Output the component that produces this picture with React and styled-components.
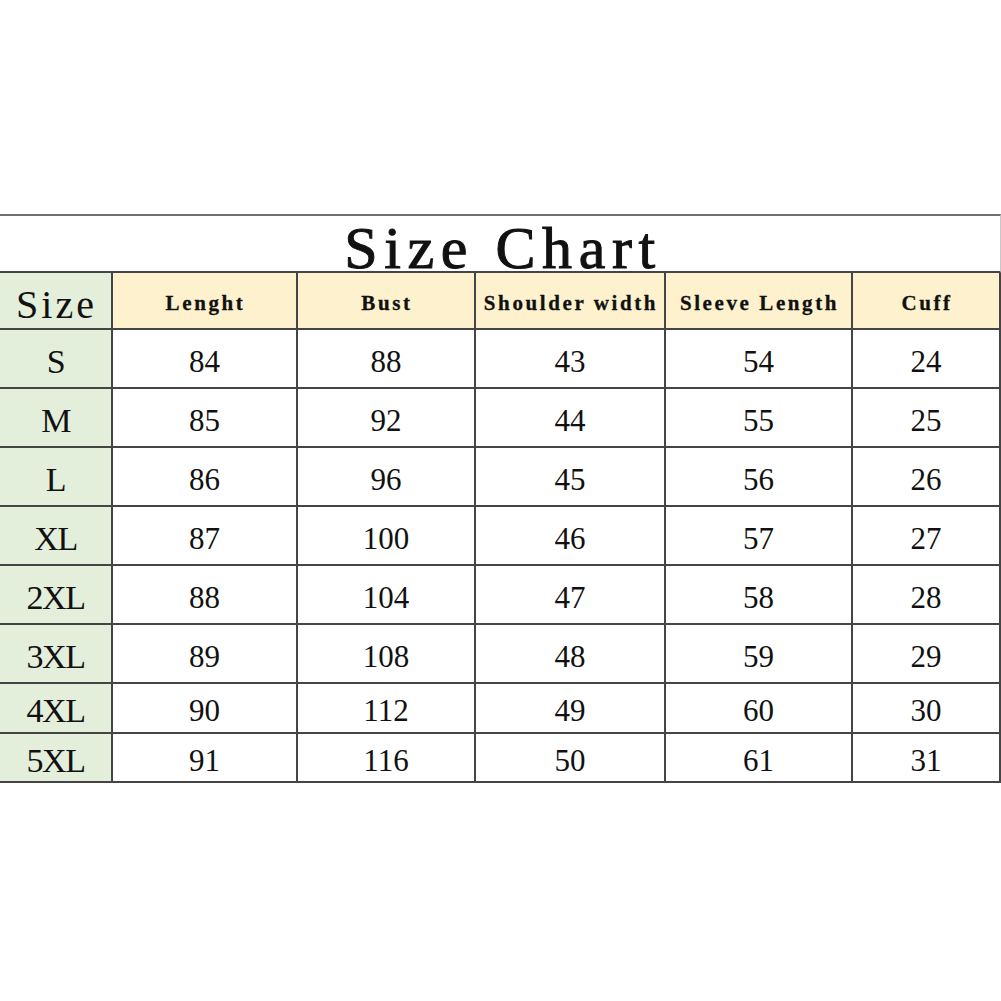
import React from 'react';
import styled, { createGlobalStyle } from 'styled-components';

const GlobalStyle = createGlobalStyle`
  html, body {
    margin: 0;
    padding: 0;
    background: #ffffff;
  }
  * {
    box-sizing: border-box;
  }
`;

const Page = styled.div`
  width: 1001px;
  height: 1001px;
  padding-top: 214px;
  background: #ffffff;
`;

const Table = styled.div`
  display: grid;
  grid-template-columns: 113px 185px 178px 190px 187px 148px;
  grid-template-rows: 59px 57px repeat(6, 59px) 50px 49px;
  width: 1001px;
`;

const TitleCell = styled.div`
  grid-column: 1 / -1;
  display: flex;
  align-items: flex-end;
  justify-content: center;
  border-top: 2px solid #6f6f6f;
  border-bottom: 2px solid #454545;
  border-right: 1px solid #c8c8c8;
`;

const Title = styled.h1`
  margin: 0 0 -7px 0;
  padding-left: 6px;
  font-family: "Liberation Serif", "Times New Roman", serif;
  font-weight: normal;
  font-size: 60px;
  letter-spacing: 6.6px;
  line-height: 60px;
  color: #111;
  -webkit-text-stroke: 1px #111;
`;

const Cell = styled.div`
  display: flex;
  align-items: center;
  justify-content: center;
  border-right: 2px solid #454545;
  border-bottom: 2px solid #454545;
  background: ${(p) => p.$bg || '#ffffff'};
  color: #111;
  white-space: nowrap;
`;

const HeadCell = styled(Cell)`
  font-family: "Liberation Serif", "Times New Roman", serif;
  font-weight: bold;
  font-size: 21px;
  letter-spacing: 2.6px;
  padding-top: 6px;
  padding-left: 2px;
  -webkit-text-stroke: 0.3px #111;
`;

const SizeHead = styled(Cell)`
  font-family: "Liberation Serif", "Times New Roman", serif;
  font-size: 40px;
  letter-spacing: 3px;
  padding-top: 8px;
  padding-left: 2px;
`;

const SizeCell = styled(Cell)`
  font-family: "Liberation Serif", "Times New Roman", serif;
  font-size: 34px;
  letter-spacing: -1.5px;
  padding-top: 6px;
`;

const ValueCell = styled(Cell)`
  font-family: "Liberation Serif", "Times New Roman", serif;
  font-size: 31px;
  padding-top: 6px;
`;

const GREEN = '#e3eedb';
const YELLOW = '#fef1cd';

const headers = ['Lenght', 'Bust', 'Shoulder width', 'Sleeve Length', 'Cuff'];

const rows = [
  ['S', 84, 88, 43, 54, 24],
  ['M', 85, 92, 44, 55, 25],
  ['L', 86, 96, 45, 56, 26],
  ['XL', 87, 100, 46, 57, 27],
  ['2XL', 88, 104, 47, 58, 28],
  ['3XL', 89, 108, 48, 59, 29],
  ['4XL', 90, 112, 49, 60, 30],
  ['5XL', 91, 116, 50, 61, 31],
];

const App = () => {
  return (
    <Page>
      <GlobalStyle />
      <Table>
        <TitleCell>
          <Title>Size Chart</Title>
        </TitleCell>

        <SizeHead $bg={GREEN}>Size</SizeHead>
        {headers.map((h) => (
          <HeadCell key={h} $bg={YELLOW}>{h}</HeadCell>
        ))}

        {rows.map((row) => (
          <React.Fragment key={row[0]}>
            <SizeCell $bg={GREEN}>{row[0]}</SizeCell>
            {row.slice(1).map((v, i) => (
              <ValueCell key={i}>{v}</ValueCell>
            ))}
          </React.Fragment>
        ))}
      </Table>
    </Page>
  );
};

export default App;
